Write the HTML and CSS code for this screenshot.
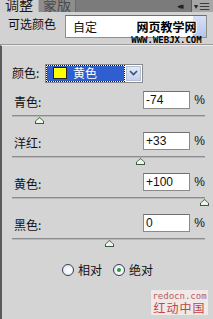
FILE: index.html
```html
<!DOCTYPE html>
<html>
<head>
<meta charset="utf-8">
<link rel="stylesheet" href="styles.css">
</head>
<body>
<div class="panel">
  <div class="tabbar">
    <div class="tab active"><span>调整</span></div>
    <div class="tab inactive"><span>蒙版</span></div>
    <div class="tabfill"><span class="collapse">◂◂</span></div>
    <div class="menu"><span class="menu-arrow">▾</span><span class="menu-lines">≡</span></div>
  </div>
  <div class="preset">
    <span class="preset-label">可选颜色</span>
    <div class="preset-select">
      <span>自定</span>
      <span class="preset-btn"></span>
    </div>
    <div class="wm1">
      <div class="wm1-title">网页教学网</div>
      <div class="wm1-url">WWW.WEBJX.COM</div>
    </div>
  </div>
  <div class="body">
    <div class="color-row">
      <span class="lbl">颜色:</span>
      <div class="color-select">
        <div class="color-sel-inner">
          <span class="swatch"></span>
          <span class="color-name">黄色</span>
        </div>
        <div class="color-btn">
          <svg width="9" height="6" viewBox="0 0 9 6"><path d="M1 1 L4.5 4.5 L8 1" fill="none" stroke="#35507a" stroke-width="1.6"/></svg>
        </div>
      </div>
    </div>

    <div class="group">
      <div class="grow">
        <span class="lbl">青色:</span>
        <span class="val">-74</span>
        <span class="pct">%</span>
      </div>
      <div class="track"><span class="thumb" style="left:23px"></span></div>
    </div>
    <div class="group">
      <div class="grow">
        <span class="lbl">洋红:</span>
        <span class="val">+33</span>
        <span class="pct">%</span>
      </div>
      <div class="track"><span class="thumb" style="left:124px"></span></div>
    </div>
    <div class="group">
      <div class="grow">
        <span class="lbl">黄色:</span>
        <span class="val">+100</span>
        <span class="pct">%</span>
      </div>
      <div class="track"><span class="thumb" style="left:188px"></span></div>
    </div>
    <div class="group">
      <div class="grow">
        <span class="lbl">黑色:</span>
        <span class="val">0</span>
        <span class="pct">%</span>
      </div>
      <div class="track"><span class="thumb" style="left:93px"></span></div>
    </div>

    <div class="radios">
      <span class="radio"><span class="circle"></span>相对</span>
      <span class="radio"><span class="circle on"><span class="dot"></span></span>绝对</span>
    </div>

    <div class="wm2">
      <div class="wm2-url">redocn.com</div>
      <div class="wm2-name">红动中国</div>
    </div>
  </div>
</div>
</body>
</html>
```
FILE: styles.css
```css
* { box-sizing: border-box; }
html, body { margin: 0; padding: 0; }
body {
  width: 213px;
  height: 319px;
  overflow: hidden;
  background: #d4d4d4;
  font-family: "Noto Sans CJK SC", "Liberation Sans", sans-serif;
  color: #111;
}
.panel { width: 213px; height: 319px; display: flex; flex-direction: column; }

.tabbar {
  height: 12px;
  display: flex;
  background: #7b7b7b;
  overflow: hidden;
  flex: none;
}
.tab {
  width: 38px;
  height: 12px;
  overflow: hidden;
  display: flex;
  justify-content: center;
  align-items: flex-end;
  font-size: 14px;
  line-height: 14px;
}
.tab span { display: block; margin-bottom: 1px; }
.tab.active { background: #d0d0d0; color: #1a1a1a; }
.tab.inactive {
  width: 38px;
  background: #8d8d8d;
  color: #4a4a4a;
  border-left: 1px solid #b0b0b0;
  border-right: 1px solid #6a6a6a;
}
.tabfill {
  flex: 1;
  display: flex;
  justify-content: flex-end;
  align-items: center;
  padding-right: 10px;
  border-right: 1px solid #5e5e5e;
}
.collapse { font-size: 9px; color: #222; letter-spacing: -3px; line-height: 12px; }
.menu {
  width: 21px;
  background: #a7a7a7;
  display: flex;
  align-items: center;
  justify-content: center;
  color: #222;
  font-size: 10px;
  line-height: 12px;
}
.menu-arrow { font-size: 8px; }
.menu-lines { font-size: 13px; }

.preset {
  position: relative;
  height: 33px;
  display: flex;
  align-items: flex-start;
  padding: 3px 6px 0 8px;
  gap: 9px;
  background: #d2d2d2;
  border-bottom: 1px solid #9a9a9a;
  flex: none;
}
.preset-label { font-size: 12px; line-height: 14px; color: #111; margin-top: 2px; }
.preset-select {
  flex: 1;
  height: 23px;
  background: #fff;
  border: 1px solid #8e8e8e;
  border-top-color: #6e6e6e;
  display: flex;
  align-items: center;
  padding-left: 7px;
  font-size: 12px;
}
.preset-select span:first-child { flex: 1; }
.preset-btn {
  width: 13px;
  height: 21px;
  background: linear-gradient(#d7e1f5, #b4c6ec);
}
.wm1 {
  position: absolute;
  left: 131px;
  top: 7px;
  width: 71px;
  text-align: center;
  pointer-events: none;
}
.wm1-title {
  font-size: 12px;
  line-height: 15px;
  color: #000;
  font-weight: bold;
  text-shadow: 1px 0 #fff, -1px 0 #fff, 0 1px #fff, 0 -1px #fff;
}
.wm1-url {
  font-family: "DejaVu Sans Mono", monospace;
  font-size: 9px;
  line-height: 10px;
  font-weight: bold;
  color: #000;
  margin-top: 1px;
}

.body {
  flex: 1;
  position: relative;
  background: #d4d4d4;
  border-left: 2px solid #5a5a5a;
  border-top: 1px solid #ececec;
  padding: 18px 6px 0 8px;
}
.lbl { font-size: 12px; line-height: 14px; color: #111; }

.color-row { display: flex; align-items: center; gap: 4px; height: 18px; margin-bottom: 9px; padding-left: 2px; }
.color-row .lbl { width: 29px; }
.color-select {
  width: 98px;
  height: 19px;
  background: #fff;
  border: 1px solid #8a8a8a;
  display: flex;
  align-items: center;
  padding: 1px;
}
.color-sel-inner {
  flex: 1;
  height: 15px;
  background: #2f5ed0;
  outline: 1px dotted #111;
  display: flex;
  align-items: center;
  padding-left: 6px;
  gap: 6px;
}
.swatch { width: 14px; height: 12px; background: #ffff00; border: 1px solid #222; }
.color-name { color: #fff; font-size: 12px; line-height: 14px; }
.color-btn {
  width: 15px;
  height: 15px;
  margin-left: 2px;
  background: linear-gradient(#e3e9f6, #c4d0ea);
  border: 1px solid #b3bfd8;
  display: flex;
  align-items: center;
  justify-content: center;
}

.group { height: 41px; }
.grow { display: flex; align-items: center; height: 18px; }
.grow .lbl { flex: 1; padding-left: 4px; margin-top: 4px; }
.val {
  width: 47px;
  height: 18px;
  background: #fff;
  border: 1px solid #8a8a8a;
  border-top-color: #707070;
  font-family: "Liberation Sans", sans-serif;
  font-size: 12px;
  line-height: 16px;
  padding-left: 2px;
}
.pct { width: 17px; text-align: right; font-family: "Liberation Sans", sans-serif; font-size: 12px; padding-right: 2px; }
.track {
  position: relative;
  margin-top: 6px;
  margin-left: 2px;
  width: 193px;
  height: 2px;
  background: #8c8c8c;
  border-bottom: 1px solid #b8b8b8;
}
.thumb {
  position: absolute;
  top: 2px;
  width: 9px;
  height: 7px;
  background: #3d5c3d;
  clip-path: polygon(50% 0, 100% 60%, 100% 100%, 0 100%, 0 60%);
}
.thumb::after {
  content: "";
  position: absolute;
  left: 1px; top: 1px; right: 1px; bottom: 1px;
  background: #eef5ec;
  clip-path: polygon(50% 0, 100% 60%, 100% 100%, 0 100%, 0 60%);
}

.radios {
  display: flex;
  gap: 11px;
  margin-top: 8px;
  padding-left: 52px;
  font-size: 12px;
  line-height: 14px;
}
.radio { display: flex; align-items: center; gap: 4px; }
.circle {
  width: 12px; height: 12px;
  border-radius: 50%;
  border: 1px solid #33405a;
  background: radial-gradient(circle at 60% 60%, #ffffff, #dde3ea);
  display: flex; align-items: center; justify-content: center;
}
.dot { width: 4px; height: 4px; border-radius: 50%; background: #2a9a3a; }

.wm2 {
  position: absolute;
  left: 149px;
  top: 244px;
  width: 57px;
  height: 25px;
  background: #efe9e8;
  text-align: center;
  padding-top: 1px;
}
.wm2-url { font-family: "DejaVu Sans Mono", monospace; font-size: 9px; line-height: 10px; color: #b46060; }
.wm2-name { font-size: 12px; line-height: 13px; color: #c44444; letter-spacing: 1px; }
```
